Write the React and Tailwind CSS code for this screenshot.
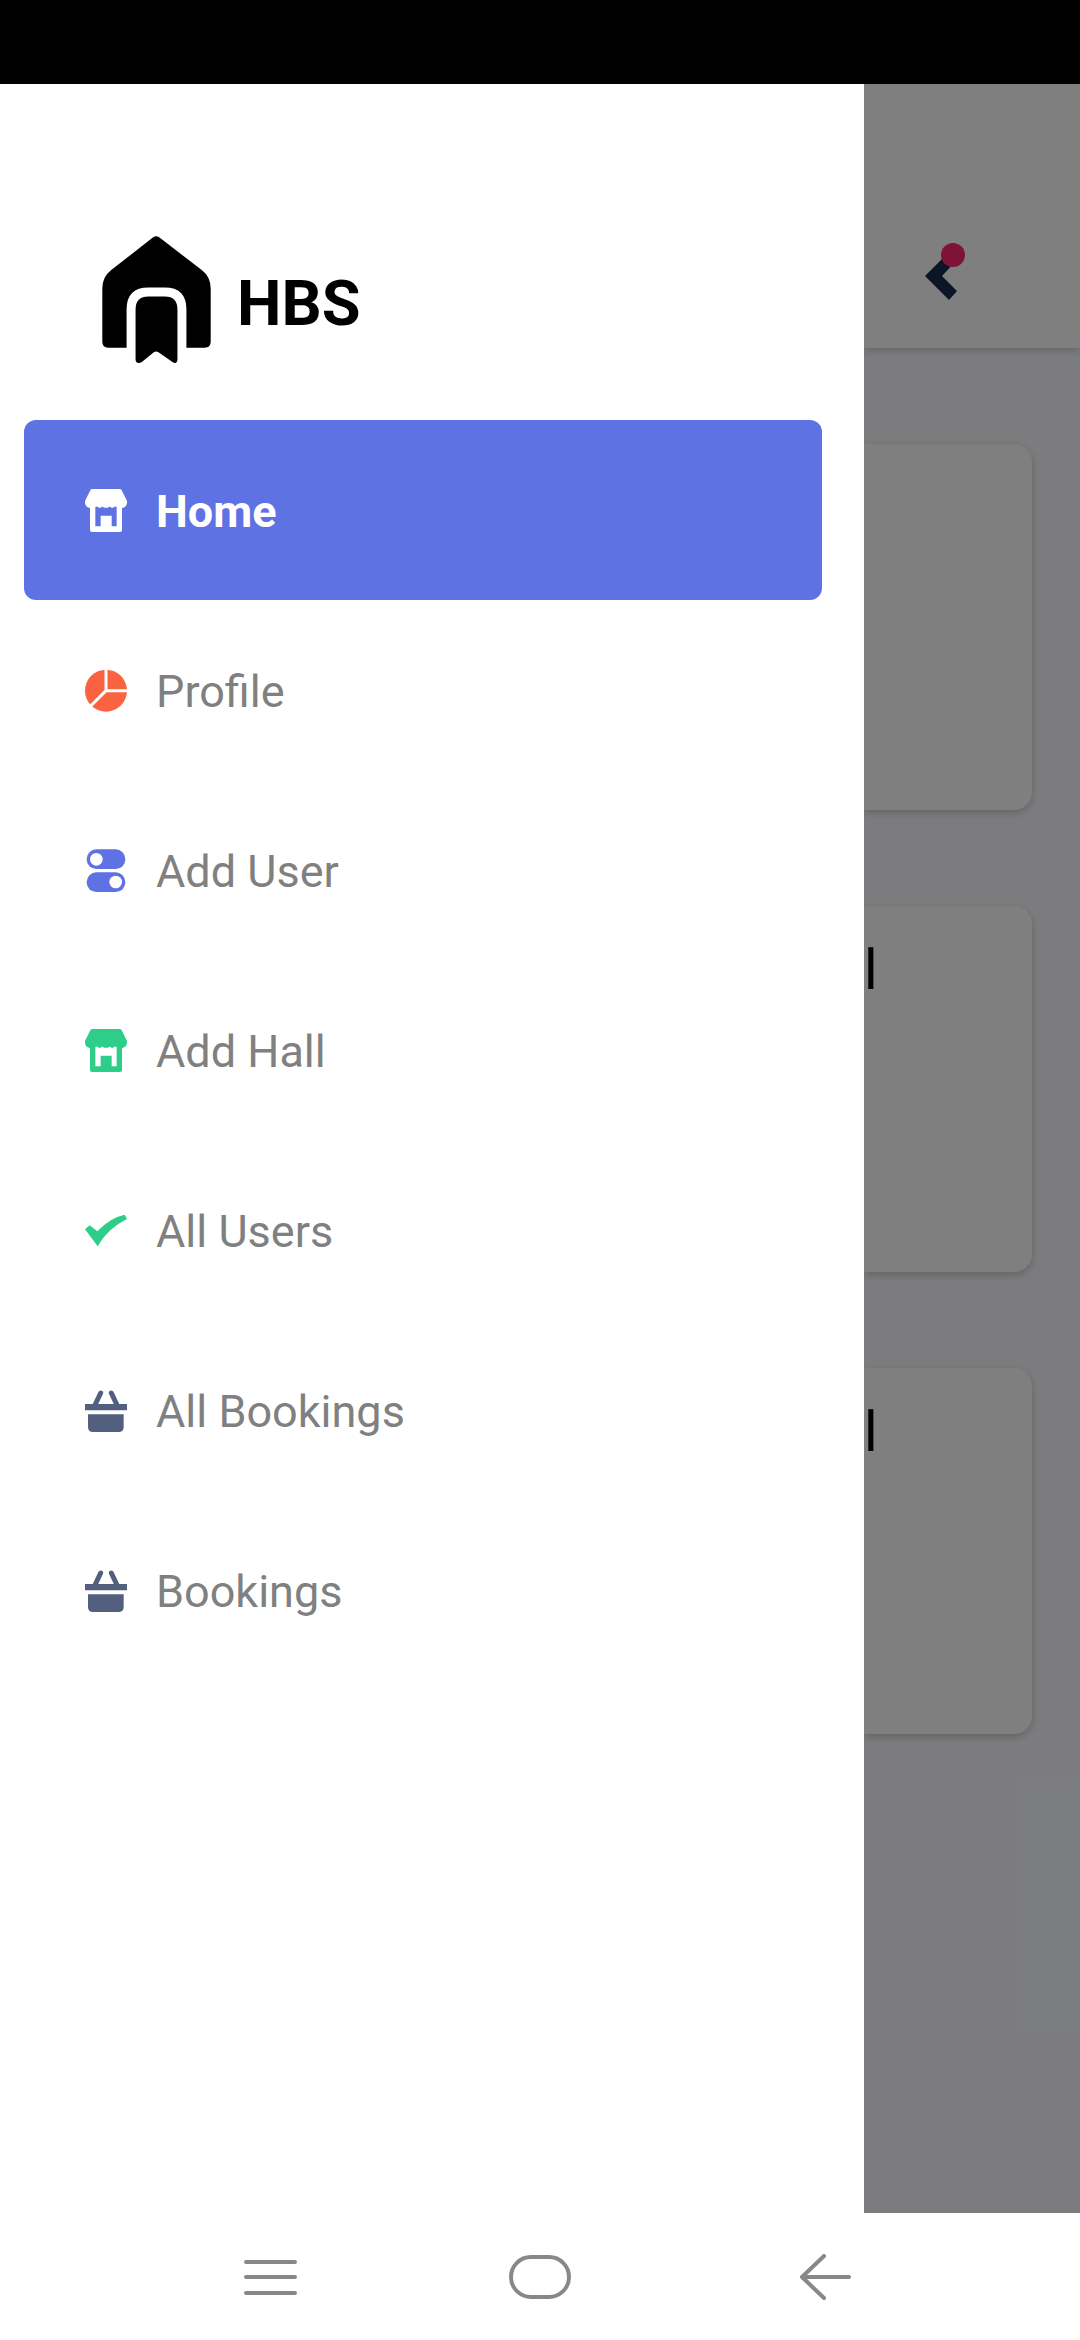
const HomeIcon = () => (
  <path
    fillRule="evenodd"
    d="M22 0H104Q108 0 110 4L126 36V42Q124 55 111 57V123Q111 129 105 129H21Q15 129 15 123V57Q2 55 0 42V36L16 4Q18 0 22 0ZM31 54V112H47V80H80V112H95V54Q91 52 88 53Q81 60 76 53H73Q63 60 53 53H50Q45 60 38 53Q35 52 31 54Z"
  />
);

const PieIcon = () => (
  <>
    <circle cx="63" cy="65" r="63" />
    <path d="M63 0V65H128M63 65L14 114" fill="none" stroke="#fff" strokeWidth="9" />
  </>
);

const SwitchesIcon = () => (
  <>
    <rect x="5" y="1" width="116" height="59" rx="29" />
    <rect x="5" y="70" width="116" height="59" rx="29" />
    <circle cx="34" cy="31" r="19" fill="#fff" />
    <circle cx="92" cy="99" r="19" fill="#fff" />
  </>
);

const CheckIcon = () => <path d="M0 61L14 49L37 67Q75 26 119 17L126 30Q68 58 38 112Z" />;

const BasketIcon = () => (
  <>
    <path d="M47 12L30 48M79 12L96 48" fill="none" stroke="currentColor" strokeWidth="15" strokeLinecap="round" />
    <path d="M0 45H126V64H0ZM9 76H116V114Q116 129 101 129H24Q9 129 9 114Z" />
  </>
);

const items = [
  { label: 'Home', Icon: HomeIcon, color: 'text-white', active: true },
  { label: 'Profile', Icon: PieIcon, color: 'text-[#fb6340]' },
  { label: 'Add User', Icon: SwitchesIcon, color: 'text-[#5e72e4]' },
  { label: 'Add Hall', Icon: HomeIcon, color: 'text-[#2dce89]' },
  { label: 'All Users', Icon: CheckIcon, color: 'text-[#2dce89]' },
  { label: 'All Bookings', Icon: BasketIcon, color: 'text-[#525f7f]' },
  { label: 'Bookings', Icon: BasketIcon, color: 'text-[#525f7f]' },
];

function Drawer() {
  return (
    <aside className="w-4/5 bg-white pr-[42px] pl-6">
      <div className="flex items-center gap-[26px] pt-[152px] pb-[57px] pl-[78px]">
        <svg viewBox="0 0 326 382" className="h-[127px] w-[109px]" aria-hidden="true">
          <path d="M153 4Q162 -3 171 4L300 103Q326 123 326 158V318Q326 336 308 336H253V221Q253 155 188 155H139Q73 155 73 221V336H18Q0 336 0 318V158Q0 123 26 103Z" />
          <path d="M100 221Q100 182 139 182H188Q226 182 226 221V370Q226 386 212 380L169 350Q162 345 155 350L118 380Q100 386 100 370Z" />
        </svg>
        <h1 className="pt-2 text-[63px] leading-[76px] font-bold text-black">HBS</h1>
      </div>
      <nav aria-label="Main">
        <ul>
          {items.map(({ label, Icon, color, active }) => (
            <li key={label}>
              <a
                href="#"
                aria-current={active ? 'page' : undefined}
                className={
                  active
                    ? 'flex h-[180px] items-center gap-[29px] rounded-xl bg-[#5e72e4] pl-[61px] font-bold text-white'
                    : 'flex h-[180px] items-center gap-[29px] rounded-xl pl-[61px] text-[#808080]'
                }
              >
                <svg viewBox="0 0 126 129" fill="currentColor" aria-hidden="true" className={`h-[43px] w-[42px] ${color}`}>
                  <Icon />
                </svg>
                <span className="pt-1 text-[45px] leading-[52px]">{label}</span>
              </a>
            </li>
          ))}
        </ul>
      </nav>
    </aside>
  );
}

function Card({ title }) {
  return (
    <article className="h-[366px] rounded-r-[18px] bg-white pt-8 pr-[158px] text-right text-[56px] leading-[64px] text-black shadow-[0_3px_8px_rgba(0,0,0,0.2)]">
      {title}
    </article>
  );
}

function DimmedPage() {
  return (
    <main className="relative flex-1 overflow-hidden bg-[#f8f9fe]">
      <header className="flex h-[264px] items-end justify-end bg-white pr-[123px] pb-12 shadow-[0_2px_8px_rgba(0,0,0,0.2)]">
        <button type="button" aria-label="Back" className="relative">
          <svg viewBox="0 0 32 48" className="h-12 w-8" fill="#172b4d" aria-hidden="true">
            <path d="M0 24L24 0L32 8L17 24L32 39L24 48Z" />
          </svg>
          <span className="absolute -top-[9px] -right-2 size-6 rounded-full bg-[#fe2472]" />
        </button>
      </header>
      <section className="flex flex-col gap-24 pt-24 pr-12">
        <Card />
        <Card title="l" />
        <Card title="l" />
      </section>
      <div className="absolute inset-0 bg-black/50" />
    </main>
  );
}

function NavigationBar() {
  return (
    <footer className="grid h-[127px] grid-cols-[1fr_auto_1fr] items-center bg-white px-[228px] text-[#888888]">
      <button type="button" aria-label="Recent apps" className="justify-self-start pl-4">
        <svg viewBox="0 0 54 46" className="h-[46px] w-[54px]" fill="none" stroke="currentColor" strokeWidth="4" strokeLinecap="round">
          <path d="M2 8H51M2 23H51M2 39H51" />
        </svg>
      </button>
      <button type="button" aria-label="Home screen">
        <svg viewBox="0 0 62 46" className="h-[46px] w-[62px]" fill="none" stroke="currentColor" strokeWidth="4">
          <rect x="2" y="3" width="58" height="40" rx="20" />
        </svg>
      </button>
      <button type="button" aria-label="Go back" className="justify-self-end">
        <svg viewBox="0 0 52 46" className="h-[46px] w-[52px]" fill="none" stroke="currentColor" strokeWidth="4" strokeLinecap="round" strokeLinejoin="round">
          <path d="M24 2L2 23L24 44M3 23H49" />
        </svg>
      </button>
    </footer>
  );
}

export default function App() {
  return (
    <div className="flex min-h-screen flex-col bg-white font-['Roboto',sans-serif]">
      <div className="h-[84px] bg-black" />
      <div className="flex flex-1">
        <Drawer />
        <DimmedPage />
      </div>
      <NavigationBar />
    </div>
  );
}
